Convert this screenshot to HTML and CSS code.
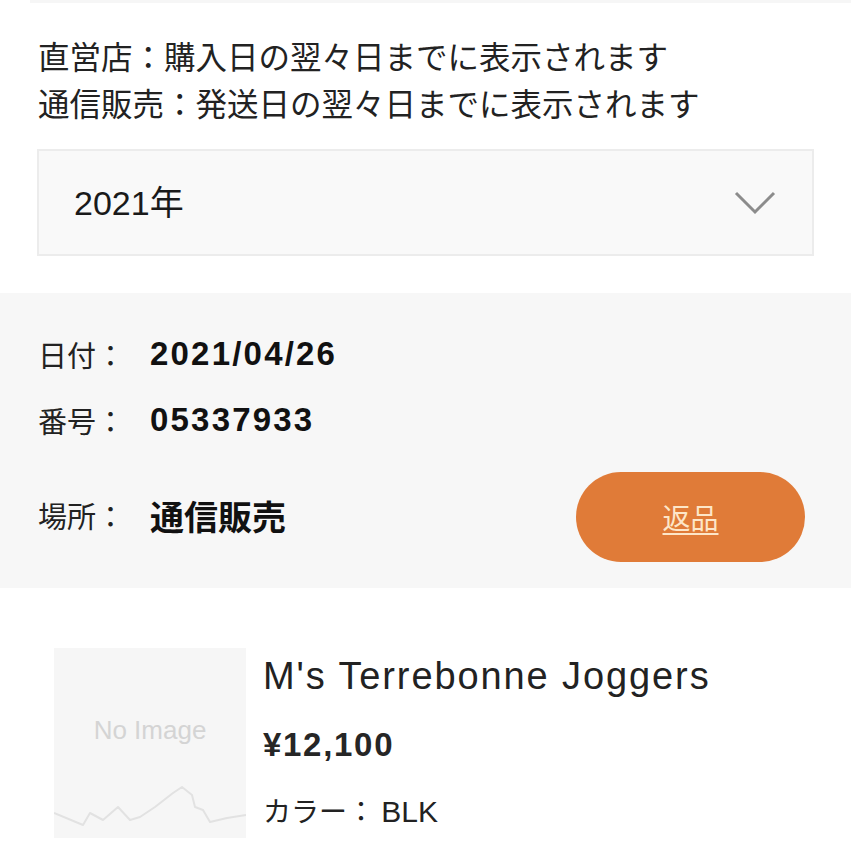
FILE: index.html
```html
<!DOCTYPE html>
<html lang="ja">
<head>
<meta charset="utf-8">
<link rel="stylesheet" href="styles.css">
</head>
<body>
<div class="topband"></div>
<div class="notes">
  <p>直営店：購入日の翌々日までに表示されます</p>
  <p>通信販売：発送日の翌々日までに表示されます</p>
</div>
<div class="select">
  <span class="select-text">2021年</span>
  <svg class="chev" width="42" height="24" viewBox="0 0 42 24"><polyline points="2,2 21,21 40,2" fill="none" stroke="#8c8c8c" stroke-width="3"/></svg>
</div>
<section class="order">
  <div class="row r1"><span class="label">日付：</span><span class="value num">2021/04/26</span></div>
  <div class="row r2"><span class="label">番号：</span><span class="value num">05337933</span></div>
  <div class="row r3"><span class="label">場所：</span><span class="value">通信販売</span><a class="btn">返品</a></div>
</section>
<section class="product">
  <div class="thumb">
    <span class="noimg">No Image</span>
    <svg class="mount" width="192" height="190" viewBox="0 0 192 190"><polyline points="0,165 29,177 36,165 49,172 64,159 76,172 86,169 101,159 119,145 128,139 138,147 141,159 149,162 156,174 173,170 192,167" fill="none" stroke="#e2e2e2" stroke-width="2" stroke-linejoin="round"/></svg>
  </div>
  <div class="info">
    <div class="title">M's Terrebonne Joggers</div>
    <div class="price">¥12,100</div>
    <div class="color">カラー： <span class="latin">BLK</span></div>
  </div>
</section>
</body>
</html>
```
FILE: styles.css
```css
html, body { margin: 0; padding: 0; background: #fff; }
body { font-family: "Noto Sans CJK JP", "Liberation Sans", sans-serif; color: #1e1e1e; width: 851px; overflow: hidden; }
.topband { height: 3px; background: #f6f6f6; margin-left: 30px; }
.notes { padding: 29px 0 0 38px; }
.notes p { margin: 0; font-size: 31.5px; line-height: 47px; color: #222; white-space: nowrap; }
.select { margin: 23px 37px 0 37px; height: 103px; border: 2px solid #ececec; background: #f9f9f9; display: flex; align-items: center; justify-content: space-between; padding: 0 36px 0 35px; }
.select-text { font-family: "Liberation Sans", "Noto Sans CJK JP", sans-serif; font-size: 34px; color: #1a1a1a; margin-top: -4px; }
.chev { display: block; }
.order { margin-top: 37px; background: #f7f7f7; height: 295px; box-sizing: border-box; padding: 38px 46px 26px 38px; display: flex; flex-direction: column; }
.row { display: flex; align-items: center; }
.r1, .r2 { height: 46px; }
.r2 { margin-top: 20px; }
.r3 { margin-top: 29px; height: 90px; }
.label { width: 112px; font-size: 29px; color: #222; }
.r3 .label { margin-top: -4px; }
.value { font-size: 34px; font-weight: 700; color: #111; }
.r3 .value { margin-top: -4px; }
.num { font-family: "Liberation Sans", sans-serif; font-size: 33px; letter-spacing: 2.2px; }
.btn { margin-left: auto; width: 229px; height: 90px; border-radius: 45px; background: #e07b38; color: #fde6c8; font-size: 28px; text-decoration: underline; text-underline-offset: 4px; display: flex; align-items: center; justify-content: center; }
.product { display: flex; padding: 60px 0 0 54px; }
.thumb { width: 192px; height: 190px; background: #f6f6f6; position: relative; display: flex; justify-content: center; }
.noimg { font-family: "Liberation Sans", sans-serif; font-size: 26px; color: #d4d4d4; margin-top: 67px; }
.mount { position: absolute; left: 0; top: 0; }
.info { margin-left: 17px; }
.title { font-family: "Liberation Sans", sans-serif; font-size: 38px; letter-spacing: 1.9px; line-height: 56px; color: #222; }
.price { font-family: "Liberation Sans", sans-serif; font-size: 33px; font-weight: 700; letter-spacing: 1.7px; line-height: 50px; margin-top: 16px; color: #262626; }
.color { font-size: 28px; line-height: 44px; margin-top: 18px; color: #222; }
.latin { font-family: "Liberation Sans", sans-serif; font-size: 30px; }
```
